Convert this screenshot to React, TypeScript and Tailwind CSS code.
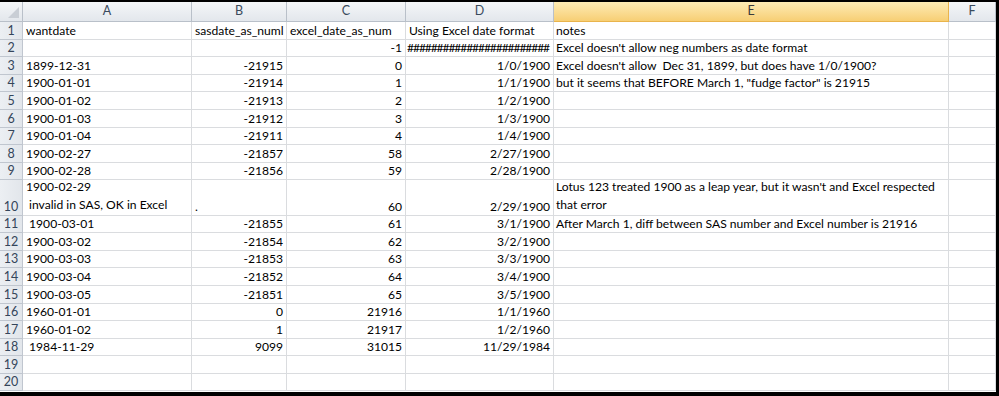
import React from "react";

type Cell = { t: string; r?: boolean };
const L = (t: string): Cell => ({ t });
const R = (t: string): Cell => ({ t, r: true });
const E: Cell = { t: "" };

const widths = ["w-[169px]", "w-[95px]", "w-[119px]", "w-[148px]", "w-[395px]", "w-[47px]"];
const letters = ["A", "B", "C", "D", "E", "F"];

const HASH = "########################";

const rows: Cell[][] = [
  [L("wantdate"), L("sasdate_as_numl"), L("excel_date_as_num"), L("Using Excel date format"), L("notes"), E],
  [E, E, R("-1"), R(HASH), L("Excel doesn't allow neg numbers as date format"), E],
  [L("1899-12-31"), R("-21915"), R("0"), R("1/0/1900"), L("Excel doesn't allow  Dec 31, 1899, but does have 1/0/1900?"), E],
  [L("1900-01-01"), R("-21914"), R("1"), R("1/1/1900"), L('but it seems that BEFORE March 1, "fudge factor" is 21915'), E],
  [L("1900-01-02"), R("-21913"), R("2"), R("1/2/1900"), E, E],
  [L("1900-01-03"), R("-21912"), R("3"), R("1/3/1900"), E, E],
  [L("1900-01-04"), R("-21911"), R("4"), R("1/4/1900"), E, E],
  [L("1900-02-27"), R("-21857"), R("58"), R("2/27/1900"), E, E],
  [L("1900-02-28"), R("-21856"), R("59"), R("2/28/1900"), E, E],
  [E, E, E, E, E, E],
  [L(" 1900-03-01"), R("-21855"), R("61"), R("3/1/1900"), L("After March 1, diff between SAS number and Excel number is 21916"), E],
  [L("1900-03-02"), R("-21854"), R("62"), R("3/2/1900"), E, E],
  [L("1900-03-03"), R("-21853"), R("63"), R("3/3/1900"), E, E],
  [L("1900-03-04"), R("-21852"), R("64"), R("3/4/1900"), E, E],
  [L("1900-03-05"), R("-21851"), R("65"), R("3/5/1900"), E, E],
  [L("1960-01-01"), R("0"), R("21916"), R("1/1/1960"), E, E],
  [L("1960-01-02"), R("1"), R("21917"), R("1/2/1960"), E, E],
  [L(" 1984-11-29"), R("9099"), R("31015"), R("11/29/1984"), E, E],
  [E, E, E, E, E, E],
  [E, E, E, E, E, E],
];

const font = { fontFamily: "Lato, 'Open Sans', sans-serif" };

function RowHeader({ n, tall }: { n: number; tall?: boolean }) {
  return (
    <div
      className={`w-[23px] shrink-0 ${tall ? "h-[35.2px]" : "h-[17.6px]"} flex items-end justify-center pb-[1px] bg-gradient-to-r from-[#eceff3] to-[#e2e6eb] border-r border-b border-[#c0c6cf] text-[#34455a] text-[12.5px] leading-[15px]`}
    >
      {n}
    </div>
  );
}

export default function App() {
  return (
    <div className="w-[999px] h-[396px] bg-black pt-[2px] pr-[3px] pb-[4px] overflow-hidden" style={font}>
      <div className="w-[996px] h-[390px] bg-white overflow-hidden text-[12.1px] text-black">
        {/* column headers */}
        <div className="flex h-[20px]">
          <div className="w-[23px] shrink-0 h-[20px] relative bg-gradient-to-b from-[#f4f6f8] to-[#e3e7ec] border-r border-b border-[#b9c0c9]">
            <svg className="absolute right-[3px] bottom-[3px]" width="11" height="11" viewBox="0 0 11 11">
              <polygon points="11,0 11,11 0,11" fill="#c9ced5" />
            </svg>
          </div>
          {letters.map((l, i) => (
            <div
              key={l}
              className={`${widths[i]} shrink-0 h-[20px] flex items-center justify-center border-r border-b text-[12.5px] ${
                l === "E"
                  ? "bg-gradient-to-b from-[#fdebb4] to-[#f7cf74] border-[#e9b44c] text-[#3a3a3a]"
                  : "bg-gradient-to-b from-[#f4f6f8] to-[#e3e7ec] border-[#b9c0c9] text-[#3a4a5c]"
              }`}
            >
              {l}
            </div>
          ))}
        </div>
        {rows.map((row, ri) => {
          const n = ri + 1;
          if (n === 10) {
            return (
              <div key={n} className="flex h-[35.2px]">
                <RowHeader n={n} tall />
                <div className={`${widths[0]} shrink-0 border-r border-b border-[#dadcdf] pl-[3px] flex flex-col justify-end pb-[1px] leading-[17.6px] whitespace-pre`}>
                  <span>1900-02-29</span>
                  <span>{" invalid in SAS, OK in Excel"}</span>
                </div>
                <div className={`${widths[1]} shrink-0 border-r border-b border-[#dadcdf] pl-[3px] flex items-end pb-[1px] leading-[15px]`}>.</div>
                <div className={`${widths[2]} shrink-0 border-r border-b border-[#dadcdf] pr-[3px] flex items-end justify-end pb-[1px] leading-[15px]`}>60</div>
                <div className={`${widths[3]} shrink-0 border-r border-b border-[#dadcdf] pr-[3px] flex items-end justify-end pb-[1px] leading-[15px]`}>2/29/1900</div>
                <div className={`${widths[4]} shrink-0 border-r border-b border-[#dadcdf] pl-[2px] flex flex-col justify-end pb-[1px] leading-[17.6px] whitespace-nowrap overflow-hidden`}>
                  <span>Lotus 123 treated 1900 as a leap year, but it wasn't and Excel respected</span>
                  <span>that error</span>
                </div>
                <div className={`${widths[5]} shrink-0 border-r border-b border-[#dadcdf]`} />
              </div>
            );
          }
          return (
            <div key={n} className="flex h-[17.6px]">
              <RowHeader n={n} />
              {row.map((c, ci) => (
                <div
                  key={ci}
                  className={`${widths[ci]} shrink-0 h-[17.6px] border-r border-b border-[#dadcdf] flex items-end pb-[1px] leading-[15px] whitespace-pre overflow-hidden ${
                    c.r ? "justify-end pr-[3px]" : ci === 4 ? "pl-[2px]" : "pl-[3px]"
                  }`}
                >
                  {c.t === HASH ? <span className="tracking-[-1.1px] pr-[1px]">{c.t}</span> : c.t}
                </div>
              ))}
            </div>
          );
        })}
      </div>
    </div>
  );
}
